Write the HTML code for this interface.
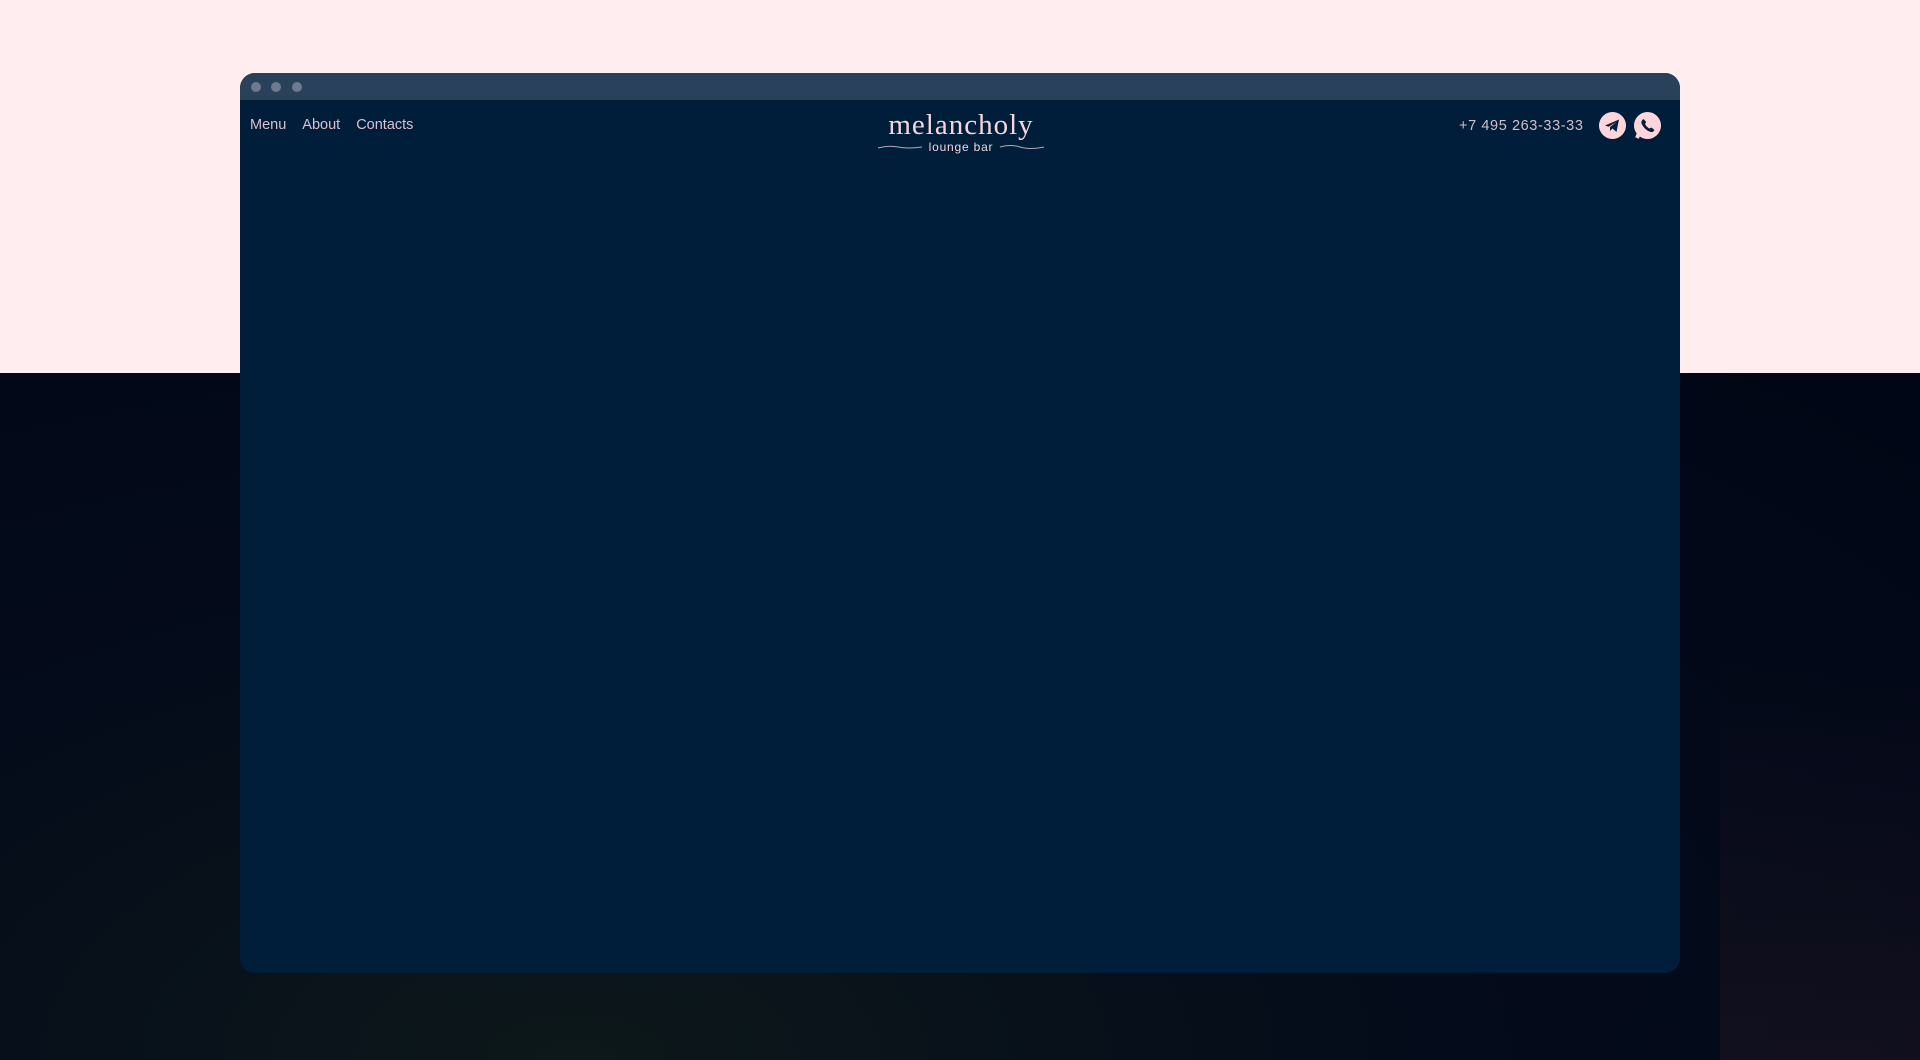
<!DOCTYPE html>
<html><head><style>
html,body{margin:0;width:1920px;height:1060px;overflow:hidden}
body{background:#ffedef;position:relative;font-family:"Liberation Sans",sans-serif}
.bottom{position:absolute;left:0;top:373px;width:1920px;height:687px;background:radial-gradient(ellipse at 30% 100%,#0d181a 0%,#040b1a 45%,#010616 100%)}
.bottom:after{content:"";position:absolute;right:0;top:280px;width:200px;height:407px;background:linear-gradient(180deg,rgba(40,25,40,0) 0%,rgba(45,28,40,.35) 100%)}
.win{position:absolute;left:240px;top:73px;width:1440px;height:900px;background:#001d3a;border-radius:15px;overflow:hidden}
.bar{height:27px;background:#29425a;position:relative}
.dot{position:absolute;top:9px;width:10px;height:10px;border-radius:50%;background:#6d7a90}
.nav{position:absolute;top:44px;left:10px;color:#d9c2cc;font-size:14.5px}
.nav span{margin-right:16px}
.logo{position:absolute;left:636px;top:37px;width:170px;text-align:center;color:#f4d6dd}
.logo .m{font-family:"Liberation Serif",serif;font-size:29px;letter-spacing:1px;line-height:30px}
.logo .l{font-size:12px;letter-spacing:.8px;margin-top:0}
.phone{position:absolute;left:1219px;top:45px;color:#d3bdc8;font-size:14.5px;letter-spacing:.6px}
.ic{position:absolute;top:39px;width:27px;height:27px;border-radius:50%;background:#ffd5dc}
</style></head><body>
<div class="bottom"></div>
<div class="win">
 <div class="bar"><div class="dot" style="left:11px"></div><div class="dot" style="left:31px"></div><div class="dot" style="left:52px"></div></div>
 <div class="nav"><span>Menu</span><span>About</span><span>Contacts</span></div>
 <div class="logo"><div class="m">melancholy</div>
  <svg width="170" height="14" style="position:absolute;left:0;top:30px"><path d="M2 8 Q12 5 22 7 T46 7" stroke="#b8a8b8" fill="none" stroke-width="1"/><path d="M124 7 Q134 4 144 7 T168 7" stroke="#b8a8b8" fill="none" stroke-width="1"/></svg>
  <div class="l">lounge bar</div></div>
 <div class="phone">+7 495 263-33-33</div>
 <div class="ic" style="left:1359px"><svg width="27" height="27"><path d="M6 13.5 L20 7.5 L17.5 20 L13.5 16.5 L11 19 L11 15 L17.5 10 L9.5 14.8 Z" fill="#0a1d3a"/></svg></div>
 <div class="ic" style="left:1394px"><svg width="27" height="27"><path d="M3 26 L6 19" stroke="#ffd5dc" stroke-width="4"/><path d="M9.5 7 Q7 8.5 7.5 11.5 Q10.5 18 16.5 20 Q19.5 20.5 20.5 18 L17.5 15.5 L15.5 16.5 Q12.5 15 11 12 L12.2 10 Z" fill="#0a1d3a"/></svg></div>
</div>
</body></html>
